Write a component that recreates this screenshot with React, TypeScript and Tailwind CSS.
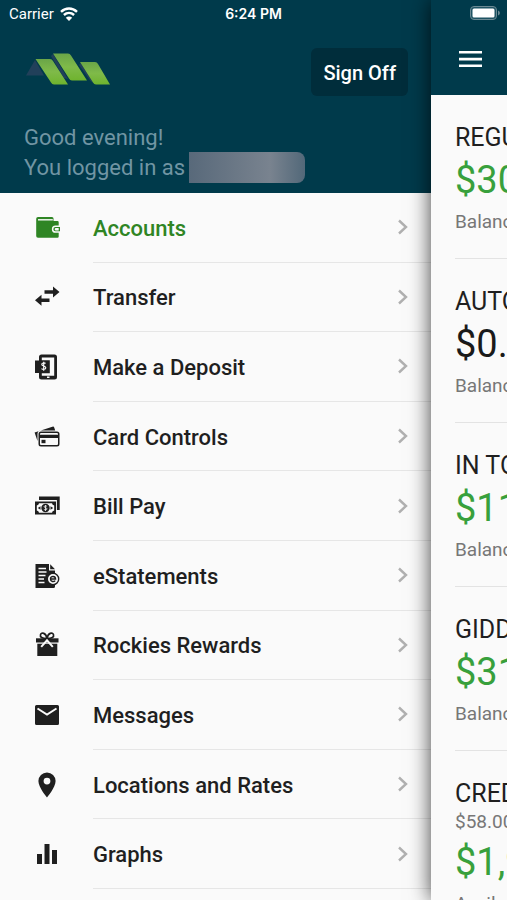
import type { ReactNode } from "react";

function Icon({ children }: { children: ReactNode }) {
  return (
    <svg viewBox="0 0 26 26" className="h-[26px] w-[26px] shrink-0" fill="currentColor" aria-hidden="true">
      {children}
    </svg>
  );
}

const WalletIcon = () => (
  <Icon>
    <path d="M4 2h14a1.500 1.500 0 0 1 1.500 1.500V6H23.500a1.200 1.200 0 0 1 1.200 1.200v14.300a1.200 1.200 0 0 1-1.200 1.200H4a1.800 1.800 0 0 1-1.800-1.800V3.800A1.800 1.800 0 0 1 4 2z" />
    <path d="M4 4.800h14.800" stroke="#fafafa" strokeWidth="1.400" fill="none" />
    <path d="M26 11.300h-4.500a2.900 2.900 0 0 0 0 5.800H26" stroke="#fafafa" strokeWidth="1.500" />
    <path d="M22 13h2.700v2.600H22a1.300 1.300 0 0 1 0-2.600z" fill="#fafafa" />
  </Icon>
);

const TransferIcon = () => (
  <Icon>
    <path d="M10.500 6.300H19V2.500l6.500 5.500-6.500 5.500V9.700h-8.500zM15.500 14.600H7.500v-3.800L1 16.300l6.500 5.500V18h8z" />
  </Icon>
);

const DepositIcon = () => (
  <Icon>
    <path d="M7.500.5h13A2.500 2.500 0 0 1 23 3v20a2.500 2.500 0 0 1-2.500 2.500h-13A2.500 2.500 0 0 1 5 23v-4H1V6.500h4V3A2.500 2.500 0 0 1 7.500.5zm.3 3v2.700h8v13H7.800v2.500h12.400V3.500zm5.200 19v1.600h2.500v-1.600z" fillRule="evenodd" />
    <path d="M11.500 9.500c-.6-.7-3.700-1-3.700.9 0 2 4 1.200 4 3.300 0 2-3.200 1.900-4.300.9M9.700 7.800v9" fill="none" stroke="#fafafa" strokeWidth="1.200" />
  </Icon>
);

const CardsIcon = () => (
  <Icon>
    <path d="M.6 8.500 18.400 2.700a1.500 1.500 0 0 1 1.900 1l.9 2.800H7A3.500 3.500 0 0 0 3.500 10v7z" />
    <path d="M7 7.500h16a2.500 2.500 0 0 1 2.500 2.500v10a2.500 2.500 0 0 1-2.500 2.500H7A2.500 2.500 0 0 1 4.500 20V10A2.500 2.500 0 0 1 7 7.500zm0 1.500a1 1 0 0 0-1 1v.7h18V10a1 1 0 0 0-1-1zm-1 5v6a1 1 0 0 0 1 1h16a1 1 0 0 0 1-1v-6z" fillRule="evenodd" />
    <path d="M7.500 15.800h4v3.400h-4z" />
  </Icon>
);

const CashIcon = () => (
  <Icon>
    <path d="M5 3.500h20.700v13.500h-2.800V7H5z" />
    <path d="M1 8.500h21v13H1zM5 10.300a2.500 2.500 0 0 1-2.200 2.200v5a2.500 2.500 0 0 1 2.200 2.200h13a2.500 2.500 0 0 1 2.200-2.200v-5a2.500 2.500 0 0 1-2.200-2.200z" fillRule="evenodd" />
    <circle cx="11.500" cy="15" r="4.200" />
    <path d="M3.800 15l2.700-1.700v3.400zM19.200 15l-2.700-1.700v3.400z" />
    <path d="M13 13.300c-.8-.6-2.900-.6-2.900.4 0 1.200 2.900.8 2.900 2.200 0 1.200-2.200 1.200-3.100.5M11.500 12v6" fill="none" stroke="#fafafa" strokeWidth=".8" />
  </Icon>
);

const StatementIcon = () => (
  <Icon>
    <path d="M1.500 1H15v6.500h6v16a1.500 1.500 0 0 1-1.500 1.500h-18z" />
    <path d="M16.200 1.200 21 6.300h-4.800z" />
    <path d="M4.500 5.500h7.500M4.500 9h8M4.500 12.500h7M4.500 16h5.500M4.500 19.500h6" stroke="#fafafa" strokeWidth="1.400" />
    <circle cx="19" cy="16" r="5.700" fill="#fafafa" stroke="currentColor" strokeWidth="1.400" />
    <path d="M16.500 16h5c0-3.400-5-3.500-5 0 0 3 3.400 3.200 4.700 1.600" fill="none" stroke="currentColor" strokeWidth="1.500" />
  </Icon>
);

const GiftIcon = () => (
  <Icon>
    <path d="M13 6.500C8 6.500 5.800 5 6.500 2.800 7.500-.2 12 .8 13 6.500zm0 0c5 0 7.200-1.500 6.500-3.700C18.500-.2 14 .8 13 6.500z" fill="none" stroke="currentColor" strokeWidth="1.700" />
    <path d="M2 6.300h22.500v4.200H2z" />
    <path d="M3.300 11.700h20V24h-20z" />
    <path d="m7.200 14.800 5.800-6.500 5.800 6.500" fill="none" stroke="#fafafa" strokeWidth="2" />
  </Icon>
);

const MailIcon = () => (
  <Icon>
    <path d="M2.500 3h21A1.500 1.500 0 0 1 25 4.500v17a1.500 1.500 0 0 1-1.500 1.500h-21A1.500 1.500 0 0 1 1 21.500v-17A1.500 1.500 0 0 1 2.500 3z" />
    <path d="m3.500 6.500 9.500 6 9.500-6" fill="none" stroke="#fafafa" strokeWidth="2" />
  </Icon>
);

const PinIcon = () => (
  <Icon>
    <path d="M13 .5a8.600 8.600 0 0 0-8.600 8.600C4.400 15.600 13 25.500 13 25.500s8.600-9.900 8.600-16.400A8.600 8.600 0 0 0 13 .5zm0 5.200a3.400 3.400 0 1 1 0 6.800 3.400 3.400 0 0 1 0-6.800z" fillRule="evenodd" />
  </Icon>
);

const GraphIcon = () => (
  <Icon>
    <path d="M3 13h5v10H3zM10.500 3h5v20h-5zM18 9h5v14h-5z" />
  </Icon>
);

const MENU = [
  { icon: WalletIcon, label: "Accounts", active: true },
  { icon: TransferIcon, label: "Transfer" },
  { icon: DepositIcon, label: "Make a Deposit" },
  { icon: CardsIcon, label: "Card Controls" },
  { icon: CashIcon, label: "Bill Pay" },
  { icon: StatementIcon, label: "eStatements" },
  { icon: GiftIcon, label: "Rockies Rewards" },
  { icon: MailIcon, label: "Messages" },
  { icon: PinIcon, label: "Locations and Rates" },
  { icon: GraphIcon, label: "Graphs" },
];

const ACCOUNTS = [
  { name: "REGU", amount: "$30", note: "Balanc", positive: true },
  { name: "AUTO", amount: "$0.", note: "Balanc", positive: false },
  { name: "IN TO", amount: "$11", note: "Balanc", positive: true },
  { name: "GIDD", amount: "$31", note: "Balanc", positive: true },
  { name: "CRED", detail: "$58.00", amount: "$1,9", note: "Availa", positive: true },
];

function Logo() {
  return (
    <svg viewBox="0 0 86 34" className="h-[34px] w-[86px]" aria-label="Home">
      <defs>
        <linearGradient id="leaf" x1="0" y1="0" x2="0" y2="1">
          <stop offset="0" stopColor="#6aa548" />
          <stop offset="0.500" stopColor="#7fba49" />
          <stop offset="1" stopColor="#6fb32e" />
        </linearGradient>
      </defs>
      <path d="M2 23.500 11 8l9 15.500z" fill="#21405a" />
      <path d="M27 4 29 2l15 25-4-1z" fill="#21405a" />
      <path d="M55 13l1.500-2 13 20-3-2z" fill="#21405a" />
      <path d="M11.500 7H26q2 0 3 2l15 23.500H30q-2 0-3-2z" fill="url(#leaf)" />
      <path d="M29 1.500h15q2 0 3 2L63 28.500H48q-2 0-3-2z" fill="url(#leaf)" />
      <path d="M56 10h15q2 0 3 2l12 20.500H72q-2 0-3-2z" fill="url(#leaf)" />
    </svg>
  );
}

function StatusBar() {
  return (
    <div className="grid h-7 grid-cols-[1fr_auto_1fr] items-center text-[15px] leading-[18px] text-white">
      <span className="flex items-center gap-[6px] pl-[9px]">
        Carrier
        <svg viewBox="0 0 18 14" className="h-[14px] w-[18px]" fill="none" stroke="currentColor" strokeWidth="2.400" aria-hidden="true">
          <path d="M1 4.800c4.600-4.400 11.400-4.400 16 0M3.900 8c3-2.800 7.200-2.800 10.200 0" />
          <path d="M9 14 5.800 10.700c1.800-1.600 4.600-1.600 6.400 0z" fill="currentColor" stroke="none" />
        </svg>
      </span>
      <span className="font-['Inter'] text-[14px] font-semibold">6:24 PM</span>
    </div>
  );
}

function Drawer() {
  return (
    <div className="flex min-w-0 flex-1 flex-col bg-[#fafafa]">
      <header className="h-[193px] shrink-0 bg-[#003a4b] pt-[48px] pr-[23px] pl-6">
        <div className="flex items-start justify-between">
          <div className="pt-1">
            <Logo />
          </div>
          <button className="h-12 rounded-md bg-[#002d3b] px-3 pt-0.5 text-[20px] font-medium text-white">Sign Off</button>
        </div>
        <p className="mt-[27px] text-[22px] leading-[29px] text-[#7195a3]">Good evening!</p>
        <p className="flex items-center gap-1 text-[22px] leading-[30px] text-[#7195a3]">
          You logged in as
          <span className="h-[31px] w-[116px] rounded-r-lg bg-linear-to-r from-[#58697a] via-[#79838f] via-70% to-[#526879]" />
        </p>
      </header>
      <nav>
        <ul className="grid min-h-[696px] auto-rows-fr">
          {MENU.map((item) => (
            <li key={item.label}>
              <a
                href="#"
                className={`flex h-full items-center pl-[34px] ${item.active ? "text-[#2f8524]" : "text-[#1f1f1f]"}`}
              >
                <item.icon />
                <span className="ml-[33px] flex h-full flex-1 items-center justify-between border-b border-[#e6e6e6] pr-[22px] text-[22px] font-medium whitespace-nowrap">
                  <span className="pt-0.5">{item.label}</span>
                  <svg viewBox="0 0 12 16" className="h-4 w-3" fill="none" stroke="#b0b0b0" strokeWidth="2.400" aria-hidden="true">
                    <path d="m2 1.500 7 6.500-7 6.500" />
                  </svg>
                </span>
              </a>
            </li>
          ))}
        </ul>
      </nav>
    </div>
  );
}

function AccountsPanel() {
  return (
    <main className="w-[15%] overflow-hidden bg-[#fafafa] whitespace-nowrap shadow-[0_0_20px_rgba(0,0,0,0.75)]">
      <header className="h-[95px] bg-[#003a4b] pt-[6px] pl-[28px]">
        <svg viewBox="0 0 32 14" className="ml-[11px] h-[14px] w-8" aria-hidden="true">
          <rect x=".5" y=".5" width="26" height="13" rx="3.500" fill="#1f5363" stroke="#6b8993" />
          <rect x="2.500" y="2.500" width="22" height="9" rx="1.500" fill="#fff" />
          <path d="M28 4.500c2.500 1 2.500 4 0 5z" fill="#6b8993" />
        </svg>
        <button className="mt-[31px] block" aria-label="Open menu">
          <svg viewBox="0 0 23 17" className="h-[17px] w-[23px]" fill="#fff" aria-hidden="true">
            <path d="M0 0h23v2.600H0zM0 6.800h23v2.600H0zM0 13.500h23v2.600H0z" />
          </svg>
        </button>
      </header>
      {ACCOUNTS.map((account) => (
        <section key={account.name} className="ml-6 min-h-[164px] border-b border-[#e3e3e3] pt-7">
          <h2 className="text-[25px] leading-[30px] text-[#1f1f1f]">{account.name}</h2>
          {account.detail && <p className="text-[19px] leading-[26px] text-[#777]">{account.detail}</p>}
          <p className={`text-[38px] leading-[54px] ${account.positive ? "text-[#38a03c]" : "text-[#1a1a1a]"}`}>
            {account.amount}
          </p>
          <p className="text-[19px] leading-[30px] text-[#777]">{account.note}</p>
        </section>
      ))}
    </main>
  );
}

export default function App() {
  return (
    <div className="relative flex h-screen overflow-hidden font-['Roboto',sans-serif]">
      <Drawer />
      <AccountsPanel />
      <div className="absolute inset-x-0 top-0">
        <StatusBar />
      </div>
    </div>
  );
}
